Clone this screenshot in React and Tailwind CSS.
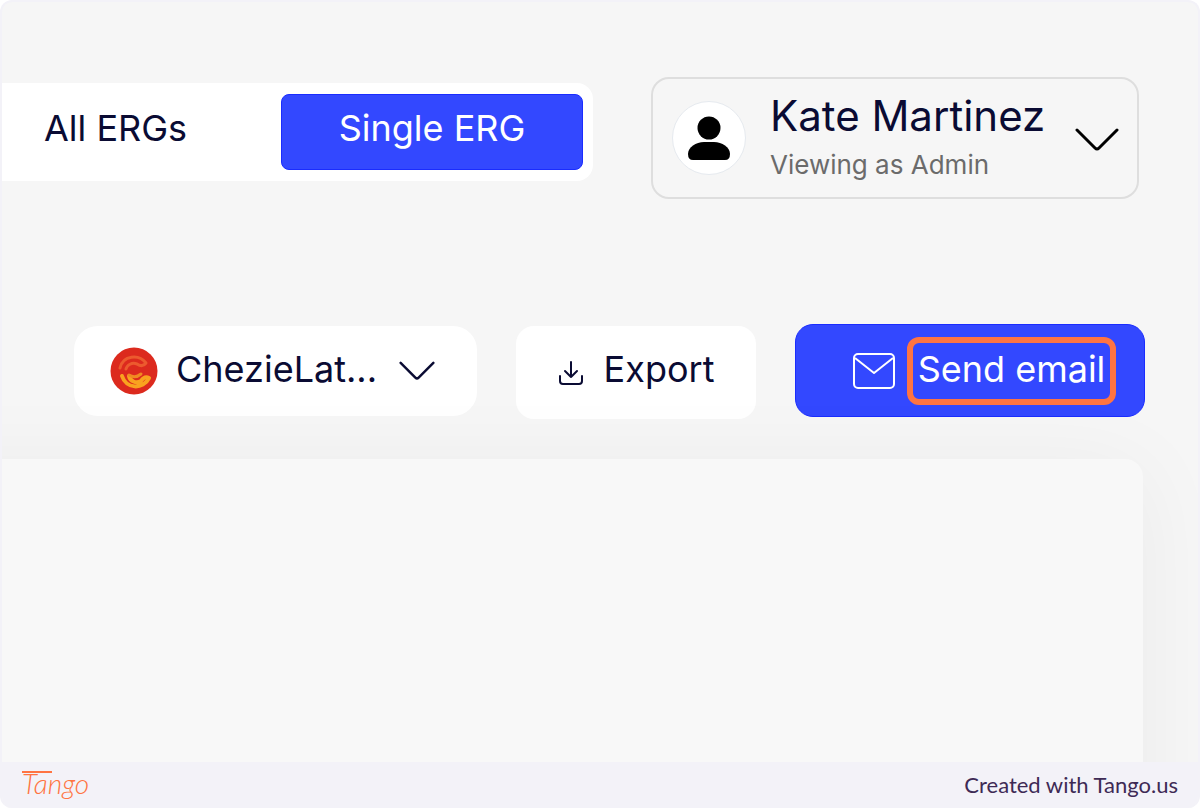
import React, { useState } from 'react';

function ChevronIcon({ className }) {
    return (
        <svg viewBox="0 0 44 24" fill="none" stroke="currentColor" strokeLinecap="round" strokeLinejoin="round" className={className} aria-hidden="true">
            <path d="M2 2 L20 20 Q22 22 24 20 L42 2" />
        </svg>
    );
}

function AvatarIcon() {
    return (
        <svg viewBox="0 0 44 44" className="w-11 h-11" fill="#000" aria-hidden="true">
            <circle cx="22" cy="12" r="11.500" />
            <path d="M1 38 C1 31 9 26 17 26 H27 C35 26 43 31 43 38 Q43 44 38 44 H6 Q1 44 1 38 Z" />
        </svg>
    );
}

function GroupLogo() {
    return (
        <svg viewBox="0 0 48 48" className="w-12 h-12 shrink-0" fill="none" strokeLinecap="round" strokeLinejoin="round" aria-hidden="true">
            <circle cx="24" cy="24" r="23.500" fill="#dc2a1e" />
            <path d="M10 21 C13 8 29 7 36 16 C33 20 30 19 27 17 C22 15 17 18 16 22" stroke="#ec5a2e" strokeWidth="3" />
            <path d="M12 29 C16 42 33 43 39 31 C35 29 33 31 31 34 C26 37 20 34 19 29" stroke="#f9a31f" strokeWidth="4" />
            <path d="M19 28 Q25 32 31 27" stroke="#f08a22" strokeWidth="3" />
        </svg>
    );
}

function DownloadIcon() {
    return (
        <svg viewBox="0 0 26 26" className="w-[26px] h-[26px]" fill="none" stroke="currentColor" strokeWidth="2" strokeLinecap="round" strokeLinejoin="round" aria-hidden="true">
            <path d="M13 2 V17 M7 11 L13 17 L19 11" />
            <path d="M2 16 V21 Q2 24 5 24 H21 Q24 24 24 21 V16" />
        </svg>
    );
}

function MailIcon() {
    return (
        <svg viewBox="0 0 42 36" className="w-[42px] h-9" fill="none" stroke="currentColor" strokeWidth="2" strokeLinejoin="round" aria-hidden="true">
            <rect x="1" y="1" width="40" height="34" rx="4" />
            <path d="M2 5 L21 20 L40 5" />
        </svg>
    );
}

function TangoLogo() {
    return (
        <span className="relative mb-1 pl-1 font-['Lato',sans-serif] text-[28px] leading-10 font-light italic text-[#ff7442]">
            Tango
            <svg viewBox="0 0 30 2" className="absolute left-1 top-2 w-[30px] h-[2px]" aria-hidden="true">
                <path d="M0 1 H30" stroke="currentColor" strokeWidth="2" />
            </svg>
        </span>
    );
}

function App() {
    const [view, setView] = useState('single');

    return (
        <div className="min-h-screen flex flex-col rounded-xl overflow-hidden border-2 border-b-0 border-[#f3f2f8] bg-[#f6f6f6] font-['Inter',sans-serif] text-[#0a0b33]">
            <main className="flex-1 flex flex-col overflow-hidden">
                <header className="flex items-start gap-[58px] pt-[75px] pr-[59px]">
                    <div className="flex-1 flex justify-between items-center mt-[6px] h-[98px] pr-[10px] pl-[42px] rounded-r-2xl bg-white">
                        <button onClick={() => setView('all')} aria-pressed={view === 'all'} className="pb-2 text-[36px] leading-10 whitespace-nowrap">
                            All ERGs
                        </button>
                        <button
                            onClick={() => setView('single')}
                            aria-pressed={view === 'single'}
                            className="w-[302px] h-[76px] pb-2 rounded-lg border border-[#1a2cff] bg-[#3348ff] text-[36px] leading-10 text-white whitespace-nowrap"
                        >
                            Single ERG
                        </button>
                    </div>
                    <button className="flex items-center w-[488px] h-[122px] pl-[19px] pr-[18px] rounded-[18px] border-2 border-[#dedede] text-left">
                        <span className="flex items-center justify-center w-[74px] h-[74px] shrink-0 rounded-full border border-[#e6eaef] bg-white">
                            <AvatarIcon />
                        </span>
                        <span className="flex-1 ml-6 whitespace-nowrap">
                            <span className="block text-[42px] leading-[54px]">Kate Martinez</span>
                            <span className="block text-[26px] leading-[44px] text-[#6b6b6b]">Viewing as Admin</span>
                        </span>
                        <ChevronIcon className="w-11 h-6 mt-1 shrink-0 stroke-[3] text-black" />
                    </button>
                </header>

                <div className="flex justify-end items-start gap-[39px] mt-[125px] pr-[53px] text-[36px] leading-10">
                    <button className="flex items-center w-[403px] h-[90px] mt-[2px] px-9 rounded-3xl bg-white">
                        <GroupLogo />
                        <span className="flex-1 ml-[18px] pb-1 text-left whitespace-nowrap">ChezieLat...</span>
                        <ChevronIcon className="w-9 h-5 mr-[6px] shrink-0 stroke-[3]" />
                    </button>
                    <button className="flex items-center justify-center gap-[20px] w-[240px] h-[93px] mt-[2px] rounded-[18px] bg-white">
                        <DownloadIcon />
                        <span className="pb-2">Export</span>
                    </button>
                    <button className="flex items-center w-[350px] h-[93px] pl-[57px] rounded-[18px] border border-[#1a2cff] bg-[#3348ff] text-white">
                        <MailIcon />
                        <span className="flex items-center justify-center w-[209px] h-[68px] ml-3 pb-1 rounded-xl border-[6px] border-[#ff7442] whitespace-nowrap">
                            Send email
                        </span>
                    </button>
                </div>

                <section className="flex-1 mt-10 -mb-24 -ml-24 mr-[55px] rounded-tr-[18px] bg-[#f8f8f8] shadow-[0_10px_90px_rgba(0,0,0,0.05)]" />
            </main>

            <footer className="flex items-center justify-between h-[46px] pl-4 pr-[20px] bg-[#f3f2f8]">
                <TangoLogo />
                <span className="font-['Lato',sans-serif] text-[22px] leading-7 text-[#3e2a55]">
                    Created with <a href="#tango">Tango.us</a>
                </span>
            </footer>
        </div>
    );
}

export default App;
